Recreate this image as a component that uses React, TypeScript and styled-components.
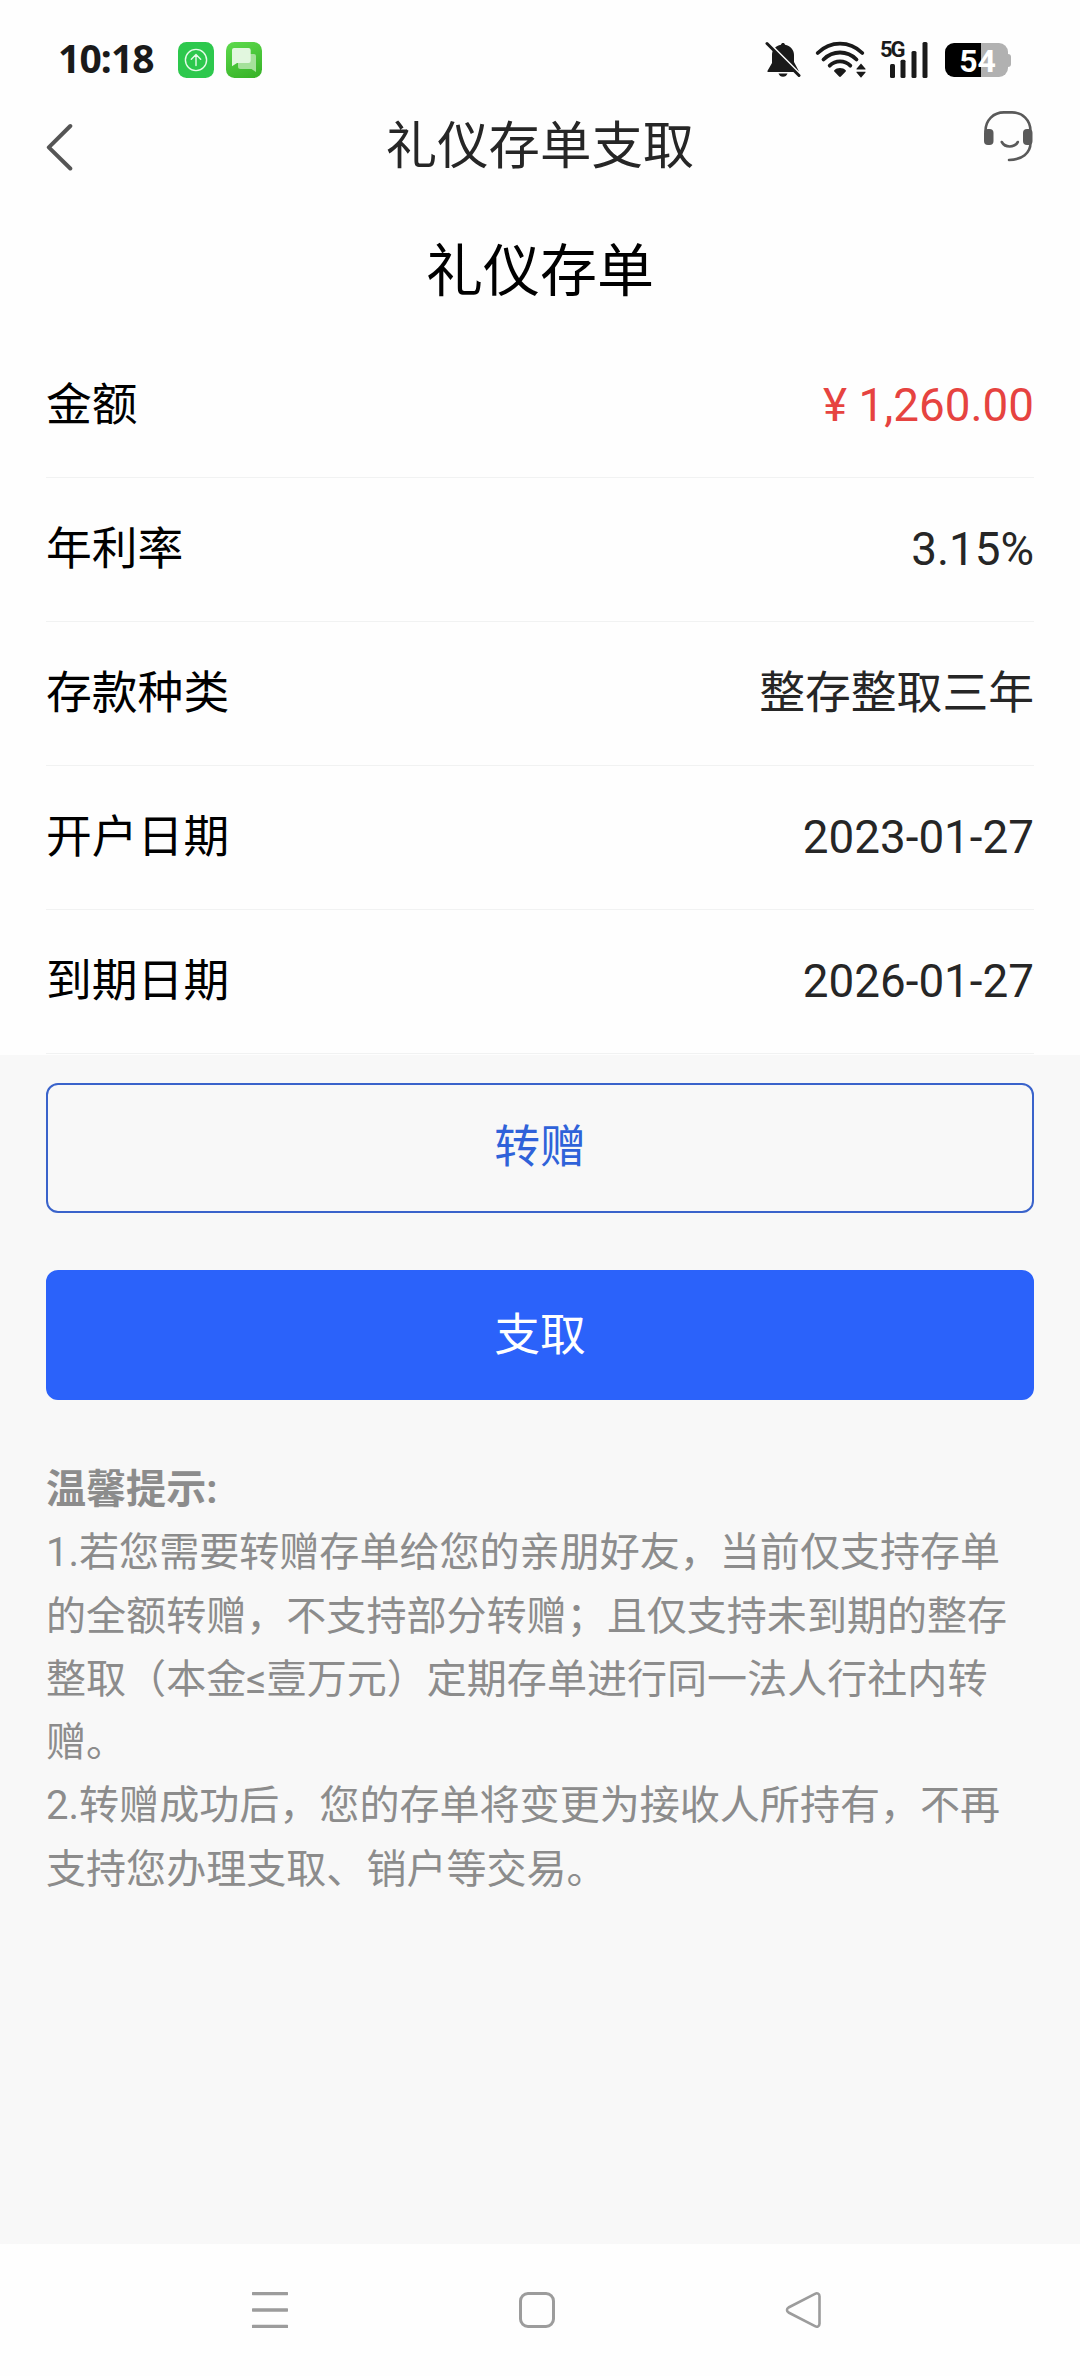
import React from "react";
import styled, { createGlobalStyle } from "styled-components";

const GlobalStyle = createGlobalStyle`
  * { box-sizing: border-box; }
  html, body { margin: 0; padding: 0; background: #fefefe; }
  body {
    font-family: Roboto, "Noto Sans CJK SC", sans-serif;
    color: #000;
  }
  svg { display: block; flex: none; }
`;

const Screen = styled.div`
  width: 1080px;
  height: 2376px;
  display: flex;
  flex-direction: column;
  overflow: hidden;
  background: #f8f8f8;
`;

const StatusBar = styled.div`
  height: 104px;
  padding: 16px 69px 0 58px;
  display: flex;
  align-items: center;
  justify-content: space-between;
  background: #fefefe;
`;

const StatusGroup = styled.div<{ $gap: number }>`
  display: flex;
  align-items: center;
  gap: ${(p) => p.$gap}px;
`;

const Clock = styled.span`
  width: 108px;
  padding-bottom: 4px;
  font: 700 39px/44px "Noto Sans", sans-serif;
  letter-spacing: -0.9px;
  color: #1a1a1a;
  white-space: nowrap;
`;

const Signal = styled.div`
  position: relative;
  width: 49px;
  height: 38px;
  margin: 0 2px 0 -1px;
`;

const Network = styled.span`
  position: absolute;
  left: 0;
  top: 0;
  font: 700 22px/17px Roboto, sans-serif;
  letter-spacing: -2px;
  color: #1a1a1a;
`;

const Battery = styled.div`
  display: flex;
  align-items: center;
`;

const BatteryBody = styled.div<{ $level: number }>`
  width: 63px;
  height: 34px;
  border-radius: 9px;
  display: flex;
  align-items: center;
  justify-content: center;
  padding: 1px 0 0 2px;
  background: linear-gradient(90deg, #000 ${(p) => p.$level}%, #b1b1b1 ${(p) => p.$level}%);
  color: #fff;
  font: 700 32px/34px Roboto, sans-serif;
`;

const BatteryTip = styled.div`
  width: 3px;
  height: 13px;
  border-radius: 0 3px 3px 0;
  background: #b1b1b1;
`;

const Header = styled.header`
  height: 86px;
  padding: 0 46px;
  display: grid;
  grid-template-columns: 60px 1fr 60px;
  align-items: center;
  background: #fefefe;
`;

const HeaderTitle = styled.h1`
  margin: 0;
  text-align: center;
  font-size: 51.4px;
  line-height: 70px;
  font-weight: 400;
  color: #262626;
`;

const SupportSlot = styled.div`
  display: flex;
  justify-content: flex-end;
  padding-bottom: 22px;
`;

const Certificate = styled.section`
  height: 864.5px;
  padding: 0 46px;
  flex: none;
  background: #fefefe;
`;

const CertificateTitle = styled.h2`
  margin: 0;
  height: 144px;
  padding-top: 40px;
  text-align: center;
  font-size: 57px;
  line-height: 84px;
  font-weight: 400;
`;

const Row = styled.div`
  height: 144px;
  padding-bottom: 0;
  display: flex;
  align-items: center;
  justify-content: space-between;
  font-size: 45.8px;
  line-height: 66px;
  border-bottom: 1px solid #f1f2f2;
`;

const Value = styled.span<{ $accent?: boolean }>`
  color: ${(p) => (p.$accent ? "#e64340" : "#262626")};
`;

const Actions = styled.div`
  padding: 28.5px 46px 0;
  display: flex;
  flex-direction: column;
  gap: 57.4px;
`;

const Button = styled.button<{ $primary?: boolean }>`
  height: 129.8px;
  padding: 1px 0 0;
  border: 2px solid ${(p) => (p.$primary ? "#2b62fa" : "#3a63cb")};
  border-radius: 12px;
  background: ${(p) => (p.$primary ? "#2b62fa" : "transparent")};
  color: ${(p) => (p.$primary ? "#fff" : "#2f62d9")};
  font: 400 45.8px/66px Roboto, "Noto Sans CJK SC", sans-serif;
`;

const Tips = styled.div`
  padding: 58px 46px 0;
  flex: 1;
  font-size: 40.05px;
  line-height: 63.3px;
  color: #8c8c8c;
`;

const TipsTitle = styled.div`
  font-weight: 700;
`;

const Tip = styled.p`
  margin: 0;
`;

const NavBar = styled.nav`
  height: 132px;
  flex: none;
  padding: 0 256px 0 250px;
  display: flex;
  align-items: center;
  justify-content: space-between;
  background: #fefefe;
`;

const UploadAppIcon = () => (
  <svg width="36" height="36" viewBox="0 0 36 36" fill="none">
    <rect width="36" height="36" rx="8.5" fill="#2dc84d" />
    <g stroke="#e6fbe9" strokeWidth="1.4" strokeLinecap="round" strokeLinejoin="round">
      <circle cx="18" cy="18" r="10.6" />
      <path d="M18 23.5V12.5M13.3 17.2L18 12.5l4.7 4.7" />
    </g>
  </svg>
);

const MessageAppIcon = () => (
  <svg width="36" height="36" viewBox="0 0 36 36" fill="none">
    <defs>
      <linearGradient id="msg" x1="0.2" y1="0" x2="0.6" y2="1">
        <stop offset="0" stopColor="#5bd84b" />
        <stop offset="1" stopColor="#3ab52a" />
      </linearGradient>
    </defs>
    <rect width="36" height="36" rx="8.5" fill="url(#msg)" />
    <path d="M14 12h14a2 2 0 0 1 2 2v16l-4.500-3H14.500a2.500 2.500 0 0 1-2.500-2.500V14a2 2 0 0 1 2-2z" fill="#a5e19b" />
    <path d="M8 6h14.500a2.200 2.200 0 0 1 2.200 2.200v10.600a2.200 2.200 0 0 1-2.200 2.200H11l-5 3.300V8a2 2 0 0 1 2-2z" fill="#e2f7df" />
  </svg>
);

const MutedBellIcon = () => (
  <svg width="36" height="38" viewBox="765 40 36 38">
    <path
      d="M783 42c1.100 0 1.800.7 2 1.700 5.200 1 9 4.800 9 10.300v7l4.500 8.500c.4.900 0 1.500-1 1.500h-29c-1.100 0-1.400-.8-.8-1.600l4.300-7.400v-8c0-5.500 3.600-9.300 9-10.300.2-1 .9-1.700 2-1.700z"
      fill="#1a1a1a"
    />
    <path d="M778.500 72.500h9c-.7 2-2.300 3.300-4.500 3.300s-3.800-1.300-4.500-3.300z" fill="#1a1a1a" />
    <path d="M766 39.500l36 36" stroke="#fefefe" strokeWidth="3" />
    <path d="M767 42.500l32 32" stroke="#1a1a1a" strokeWidth="3" strokeLinecap="round" />
  </svg>
);

const WifiIcon = () => (
  <svg width="52" height="38" viewBox="815 40 52 38" fill="none">
    <g stroke="#1a1a1a" strokeWidth="3.8" strokeLinecap="round">
      <path d="M817.700 52q9.700-9.300 22.300-9.300t22.300 9.300" />
      <path d="M823.500 58.500q7-7 16.500-7t16.500 7" />
      <path d="M829.700 64.700q4.300-4.300 10.300-4.300t10.300 4.300" />
    </g>
    <path d="M840 67c2.300 0 4.200.8 5.700 2.200.4.400.4.900 0 1.300l-4.800 5c-.5.600-1.300.6-1.800 0l-4.800-5c-.4-.4-.4-.9 0-1.300 1.500-1.400 3.400-2.200 5.700-2.200z" fill="#1a1a1a" />
    <path d="M861 62.500l4.500 5.300v.7h-9v-.7zM861 76.700l4.500-5.200v-.8h-9v.8z" fill="#1a1a1a" />
  </svg>
);

const SignalBars = () => (
  <svg width="49" height="38" viewBox="880 40 49 38" fill="#1a1a1a">
    <rect x="890" y="63" width="5" height="14" rx="1.5" />
    <rect x="900.5" y="58.8" width="5" height="18.2" rx="1.5" />
    <rect x="911.5" y="50" width="5" height="27" rx="1.5" />
    <rect x="922.5" y="41" width="5" height="36" rx="1.5" />
  </svg>
);

const BackIcon = () => (
  <svg width="28" height="48" viewBox="46 123 28 48" fill="none">
    <path d="M70.300 126L48.800 147.300l21.500 21.200" stroke="#555" strokeWidth="4" strokeLinecap="round" strokeLinejoin="round" />
  </svg>
);

const SupportIcon = () => (
  <svg width="52" height="52" viewBox="982 110 52 52" fill="none">
    <g stroke="#5a5a5a" strokeWidth="2.6" strokeLinecap="round">
      <path d="M985.500 131c0-11 8-18.600 18.500-18.600h8c10.500 0 18.500 7.600 18.500 18.600" />
      <path d="M1030.500 143c0 10-8.500 16.800-21.500 17" />
      <path d="M1001.800 142c3.300 6 12.700 6 16 0" />
    </g>
    <rect x="984" y="129" width="9.5" height="16" rx="4" fill="#5a5a5a" />
    <rect x="1023" y="129" width="9.5" height="16" rx="4" fill="#5a5a5a" />
  </svg>
);

const MenuIcon = () => (
  <svg width="40" height="40" viewBox="250 2290 40 40" fill="#9c9c9c">
    <rect x="252" y="2292" width="36" height="3.2" rx="0.6" />
    <rect x="252" y="2308.3" width="36" height="3.4" rx="0.6" />
    <rect x="252" y="2324.8" width="36" height="3.2" rx="0.6" />
  </svg>
);

const HomeIcon = () => (
  <svg width="40" height="40" viewBox="518 2290 40 40" fill="none">
    <rect x="521.5" y="2293.5" width="33" height="33" rx="7.5" stroke="#9c9c9c" strokeWidth="3" />
  </svg>
);

const ReturnIcon = () => (
  <svg width="40" height="40" viewBox="784 2290 40 40" fill="none">
    <path
      d="M788.500 2307.500L815 2293.800c2.300-1.200 4.500 0 4.500 2.400v27.600c0 2.400-2.200 3.600-4.500 2.400L788.500 2312.500c-2-1.200-2-3.800 0-5z"
      stroke="#9c9c9c"
      strokeWidth="2.6"
      strokeLinejoin="round"
    />
  </svg>
);

const details = [
  { label: "金额", value: "¥ 1,260.00", accent: true },
  { label: "年利率", value: "3.15%" },
  { label: "存款种类", value: "整存整取三年" },
  { label: "开户日期", value: "2023-01-27" },
  { label: "到期日期", value: "2026-01-27" },
];

const tips = [
  "1.若您需要转赠存单给您的亲朋好友，当前仅支持存单的全额转赠，不支持部分转赠；且仅支持未到期的整存整取（本金≤壹万元）定期存单进行同一法人行社内转赠。",
  "2.转赠成功后，您的存单将变更为接收人所持有，不再支持您办理支取、销户等交易。",
];

export default function App() {
  return (
    <Screen>
      <GlobalStyle />
      <StatusBar>
        <StatusGroup $gap={12}>
          <Clock>10:18</Clock>
          <UploadAppIcon />
          <MessageAppIcon />
        </StatusGroup>
        <StatusGroup $gap={14}>
          <MutedBellIcon />
          <WifiIcon />
          <Signal>
            <Network>5G</Network>
            <SignalBars />
          </Signal>
          <Battery>
            <BatteryBody $level={57}>54</BatteryBody>
            <BatteryTip />
          </Battery>
        </StatusGroup>
      </StatusBar>
      <Header>
        <BackIcon />
        <HeaderTitle>礼仪存单支取</HeaderTitle>
        <SupportSlot>
          <SupportIcon />
        </SupportSlot>
      </Header>
      <Certificate>
        <CertificateTitle>礼仪存单</CertificateTitle>
        {details.map((d) => (
          <Row key={d.label}>
            <span>{d.label}</span>
            <Value $accent={d.accent}>{d.value}</Value>
          </Row>
        ))}
      </Certificate>
      <Actions>
        <Button>转赠</Button>
        <Button $primary>支取</Button>
      </Actions>
      <Tips>
        <TipsTitle>温馨提示:</TipsTitle>
        {tips.map((t) => (
          <Tip key={t}>{t}</Tip>
        ))}
      </Tips>
      <NavBar>
        <MenuIcon />
        <HomeIcon />
        <ReturnIcon />
      </NavBar>
    </Screen>
  );
}
